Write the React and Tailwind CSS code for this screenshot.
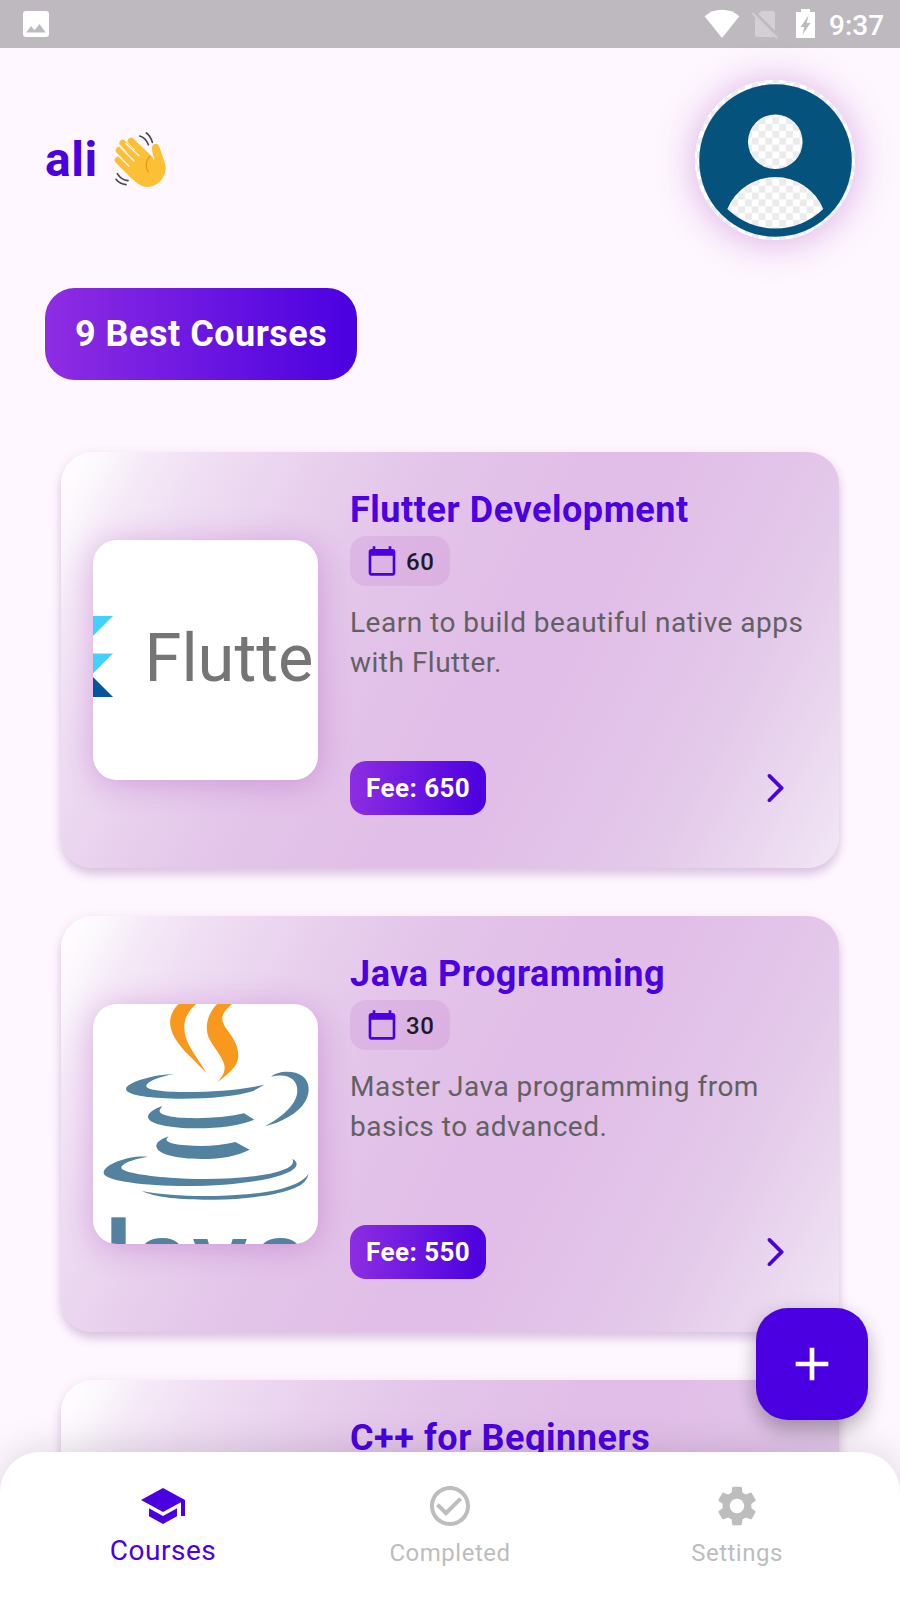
import React from "react";
import { MdSchool, MdCheckCircleOutline, MdSettings, MdCalendarToday, MdAdd } from "react-icons/md";

function StatusBar() {
  return (
    <div className="flex h-12 shrink-0 items-center justify-between bg-[#beb8bf] pl-[23px] pr-4">
      <svg className="h-[26px] w-[26px]" viewBox="0 0 26 26">
        <path fill="#fff" fillRule="evenodd" d="M3 0h20a3 3 0 0 1 3 3v20a3 3 0 0 1-3 3H3a3 3 0 0 1-3-3V3a3 3 0 0 1 3-3zM3.3 21.5h19.4L16.5 13l-5 6.3L8 15z" />
      </svg>
      <div className="flex h-full">
        <svg className="h-12 w-[120px]" viewBox="700 0 120 48">
          <path fill="#fff" d="M704.6 16.2Q712 9.8 722 9.8t17.4 6.4L722 38z" />
          <path fill="#d4ced5" d="M761.3 11H772.5a2.5 2.5 0 0 1 2.5 2.5V30.8L758.3 14.1zM755 17.3L774.5 36.5Q773.5 37 772.5 37H757.5a2.5 2.5 0 0 1-2.5-2.5z" />
          <path stroke="#d4ced5" strokeWidth="2" d="M752.5 13.3l24.8 24.8" />
          <path fill="#fff" fillRule="evenodd" d="M796 12h5v-3h9v3h5v26h-19zM808.5 15.5l-8 11.5h3.8l-1.8 7.6l8-11.6h-3.8z" />
        </svg>
        <span className="ml-[9px] w-[55px] whitespace-nowrap text-[28px] font-medium leading-[51px] text-white">9:37</span>
      </div>
    </div>
  );
}

function WavingHand() {
  return (
    <svg className="h-[60px] w-[55px]" viewBox="340 390 165 180" fill="none" strokeLinecap="round">
      <g stroke="#fbc036" strokeWidth="20">
        <path d="M355 480l50 50M358 451l55 55M369 429l58 58M394 423l56 54" />
      </g>
      <path fill="#fbc036" d="M348 487l50 50c14 13 27 24 45 24 30 0 55-27 55-56 0-10-4-22-9-36l-11-31c-4-11-21-8-21 5-1 10 3 22 7 32 1 4-3 5-6 1l-26-26-50 0-24 40z" />
      <path stroke="#fef7ff" strokeWidth="4" d="M361 472l27 27M364 443l39 40M378 430l40 37" />
      <path stroke="#e9921d" strokeWidth="4" d="M450 470c-13 14-13 32-4 46" />
      <path stroke="#484b4d" strokeWidth="5" d="M420 408c12 3 21 13 26 26M440 399c10 7 15 17 18 28M353 521c7 12 18 20 32 21M349 538c7 9 16 15 30 16" />
    </svg>
  );
}

function Avatar() {
  return (
    <div className="h-40 w-40 rounded-full shadow-[0_2px_38px_rgba(156,39,176,0.36)]">
      <svg className="h-40 w-40 rounded-full" viewBox="0 0 160 160">
        <defs>
          <pattern id="checks" width="13.7" height="13.7" patternUnits="userSpaceOnUse" x="2" y="3">
            <rect width="13.7" height="13.7" fill="#fff" />
            <rect width="6.85" height="6.85" fill="#ebebeb" />
            <rect x="6.85" y="6.85" width="6.85" height="6.85" fill="#ebebeb" />
          </pattern>
        </defs>
        <rect width="160" height="160" fill="url(#checks)" />
        <circle cx="80.5" cy="80.5" r="76.3" fill="#05527c" />
        <circle cx="80.3" cy="61.7" r="27.3" fill="url(#checks)" />
        <path d="M32.3 129a52 52 0 0 1 96 0a69 69 0 0 1-96 0z" fill="url(#checks)" />
      </svg>
    </div>
  );
}

function FlutterLogo() {
  return (
    <svg className="h-60 w-[225px]" viewBox="0 0 225 240">
      <path fill="#42d0ff" d="M0 76h20L0 96zM0 113.5h20L0 133.5z" />
      <path fill="#01579b" d="M0 137l20 20H0z" />
      <text x="51.5" y="141" fontSize="66" fill="#757575" fontFamily="Roboto, sans-serif" textLength="169" lengthAdjust="spacingAndGlyphs">Flutte</text>
    </svg>
  );
}

function JavaLogo() {
  return (
    <svg className="h-60 w-[225px]" viewBox="39 42 675 720">
      <path fill="#f8981d" d="M296 42H348C315 72 306 105 317 140C327 176 358 210 380 250C345 212 307 182 285 145C263 106 265 72 296 42zM411 42H456C425 68 419 87 437 113C456 139 475 163 475 196C475 232 440 254 411 279C426 260 437 246 433 226C427 196 398 171 385 140C373 106 385 69 411 42z" />
      <g fill="#5382a1">
        <path d="M284 252C220 253 139 278 138 297C138 317 220 326 306 326C390 326 470 319 520 303L553 284C490 299 400 306 320 306C250 306 199 300 199 288C199 276 235 260 284 252z" />
        <path d="M573 260C590 244 640 237 668 259C689 276 692 306 676 334C655 371 605 397 555 409C605 382 647 347 652 307C655 265 620 248 573 260z" />
        <path d="M247 348C219 358 204 369 204 381C205 402 270 415 350 415C420 415 480 406 523 389L492 370C440 382 380 386 320 384C265 382 235 373 239 360z" />
        <path d="M266 439C241 448 229 457 229 469C231 493 290 507 365 507C425 507 475 497 509 479L466 456C420 467 370 470 320 466C280 463 255 456 260 446z" />
        <path d="M203 501C160 494 71 520 71 549C72 572 190 588 320 588C490 588 625 562 647 531C654 520 647 511 637 507C648 527 617 541 570 551C490 567 370 571 270 563C190 557 124 545 124 533C125 520 165 506 203 501z" />
        <path d="M186 603C230 625 320 630 405 629C520 627 640 610 673 576Q683 566 686 551C665 583 600 603 510 612C400 622 270 620 186 603z" />
      </g>
      <rect x="94" y="682" width="43" height="100" fill="#5382a1" />
      <text y="904" x="165 338 520" fontSize="294" fontWeight="700" fill="#5382a1" fontFamily="'Liberation Sans', sans-serif">ava</text>
    </svg>
  );
}

function CardShell({ children }) {
  return (
    <article className="flex h-[416px] shrink-0 items-center gap-8 rounded-[32px] bg-[linear-gradient(118.1deg,#ffffff_0%,#fcf9fd_4%,#f5e9f7_9%,#efddf3_16%,#e9d2ee_25%,#e4c7ea_35%,#e2c1e8_45%,#e1bee7_53%,#e1bee7_62%,#e2c3e9_72%,#e4caea_81%,#e9d5ee_89%,#f2e7f6_100%)] p-8 shadow-[0_7px_10px_rgba(120,50,140,0.2),0_2px_12px_rgba(120,50,140,0.1)]">
      {children}
    </article>
  );
}

function CardTitle({ children }) {
  return <h2 className="whitespace-nowrap text-[36px] font-bold leading-[52px] tracking-[0.54px] text-[#4a00e0]">{children}</h2>;
}

function CourseCard({ title, days, description, fee, logo }) {
  return (
    <CardShell>
      <div className="h-60 w-[225px] shrink-0 overflow-hidden rounded-3xl bg-white shadow-[0_4px_32px_rgba(156,39,176,0.3)]">{logo}</div>
      <div className="flex h-full flex-1 flex-col items-start">
        <CardTitle>{title}</CardTitle>
        <div className="flex h-[50px] items-center gap-2 rounded-2xl bg-[#9c27b0]/10 px-4">
          <MdCalendarToday className="h-8 w-8 text-[#4a00e0]" />
          <span className="mt-[2px] text-[24px] font-medium leading-[34px] tracking-[0.5px] text-[#1d1b20]">{days}</span>
        </div>
        <p className="mt-[17px] w-[457px] text-[28px] leading-10 tracking-[0.5px] text-[#616161]">{description}</p>
        <div className="mb-[21px] mt-auto flex w-full items-center justify-between pr-[14px]">
          <span className="w-[136px] whitespace-nowrap rounded-2xl bg-linear-to-r/srgb from-[#8e2de2] to-[#4a00e0] px-4 py-2 text-[26px] font-bold leading-[38px] tracking-[0.45px] text-white">Fee: {fee}</span>
          <svg className="h-9 w-9" viewBox="0 0 24 24" fill="#4a00e0">
            <path d="M7.38 21.01c.49.49 1.28.49 1.77 0l8.31-8.31c.39-.39.39-1.02 0-1.41L9.15 2.98c-.49-.49-1.28-.49-1.77 0s-.49 1.28 0 1.77L14.62 12l-7.25 7.25c-.48.48-.48 1.28.01 1.76z" />
          </svg>
        </div>
      </div>
    </CardShell>
  );
}

function NavItem({ icon: Icon, label, active }) {
  return (
    <div className={active ? "flex w-[287px] flex-col items-center text-[#4a00e0]" : "flex w-[287px] flex-col items-center text-[#bdbdbd]"}>
      <Icon className="h-12 w-12" />
      <span className={active ? "mt-px text-[28px] leading-10 tracking-[0.5px]" : "mt-[3px] text-[24px] leading-10 tracking-[0.5px]"}>{label}</span>
    </div>
  );
}

const courses = [
  { title: "Flutter Development", days: 60, description: "Learn to build beautiful native apps with Flutter.", fee: 650, logo: <FlutterLogo /> },
  { title: "Java Programming", days: 30, description: "Master Java programming from basics to advanced.", fee: 550, logo: <JavaLogo /> },
];

export default function App() {
  return (
    <div className="relative flex h-[1600px] w-[900px] flex-col overflow-hidden bg-[#fef7ff] font-['Roboto',sans-serif]">
      <StatusBar />
      <main className="min-h-0 flex-1">
        <header className="flex items-center justify-between pl-[45px] pr-[45px] pt-8">
          <div className="flex items-center">
            <h1 className="text-[48px] font-bold leading-[60px] tracking-[0.5px] text-[#4a00e0]">ali</h1>
            <div className="ml-[15px]"><WavingHand /></div>
          </div>
          <Avatar />
        </header>
        <div className="ml-[45px] mt-12 flex h-[92px] w-[312.4px] items-center rounded-[30px] bg-linear-to-r/srgb from-[#8e2de2] to-[#4a00e0] pl-[30px]">
          <span className="whitespace-nowrap text-[36px] font-bold tracking-[0.5px] text-white">9 Best Courses</span>
        </div>
        <section className="mt-[72px] flex flex-col gap-12 px-[61px]">
          {courses.map((course) => (
            <CourseCard key={course.title} {...course} />
          ))}
          <CardShell>
            <div className="h-60 w-[225px] shrink-0 rounded-3xl bg-white" />
            <div className="h-full flex-1">
              <CardTitle>C++ for Beginners</CardTitle>
            </div>
          </CardShell>
        </section>
      </main>
      <button className="absolute bottom-[180px] right-8 flex h-28 w-28 items-center justify-center rounded-[32px] bg-[#4a00e0] text-white shadow-[0_12px_20px_rgba(0,0,0,0.2),0_2px_20px_rgba(0,0,0,0.12)]">
        <MdAdd className="h-14 w-14" />
      </button>
      <nav className="relative flex h-[148px] shrink-0 justify-center rounded-t-[40px] bg-white pt-[30px] shadow-[0_0_40px_rgba(0,0,0,0.15)]">
        <NavItem icon={MdSchool} label="Courses" active />
        <NavItem icon={MdCheckCircleOutline} label="Completed" />
        <NavItem icon={MdSettings} label="Settings" />
      </nav>
    </div>
  );
}
